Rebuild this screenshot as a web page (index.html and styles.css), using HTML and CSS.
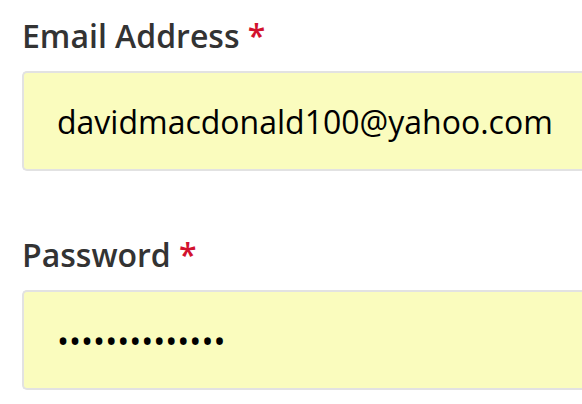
FILE: index.html
```html
<!DOCTYPE html>
<html>
<head>
<meta charset="utf-8">
<link rel="stylesheet" href="styles.css">
</head>
<body>
<form class="form">
  <div class="field">
    <label class="label" for="email">Email Address <span class="req">*</span></label>
    <input class="input" id="email" type="email" value="davidmacdonald100@yahoo.com">
  </div>
  <div class="field">
    <label class="label" for="pw">Password <span class="req">*</span></label>
    <input class="input" id="pw" type="password" value="abcdefghijklmn">
  </div>
</form>
</body>
</html>
```
FILE: styles.css
```css
html, body {
  margin: 0;
  padding: 0;
  background: #ffffff;
  overflow: hidden;
}
.form {
  box-sizing: border-box;
  padding: 14px 0 0 22px;
  display: flex;
  flex-direction: column;
  gap: 62px;
  width: 100%;
}
.field {
  display: flex;
  flex-direction: column;
  gap: 13px;
}
.label {
  font-family: "Open Sans", sans-serif;
  font-weight: 600;
  font-size: 32px;
  line-height: 44px;
  color: #333333;
}
.req {
  color: #d2122e;
}
.input {
  box-sizing: border-box;
  width: 100%;
  height: 100px;
  margin: 0;
  padding: 0 0 0 33px;
  border: 2px solid #e2e2e2;
  border-right: 0;
  border-radius: 5px 0 0 5px;
  background: #fafcbe;
  font-family: "Open Sans", sans-serif;
  font-size: 32px;
  color: #000000;
  outline: none;
}
```
